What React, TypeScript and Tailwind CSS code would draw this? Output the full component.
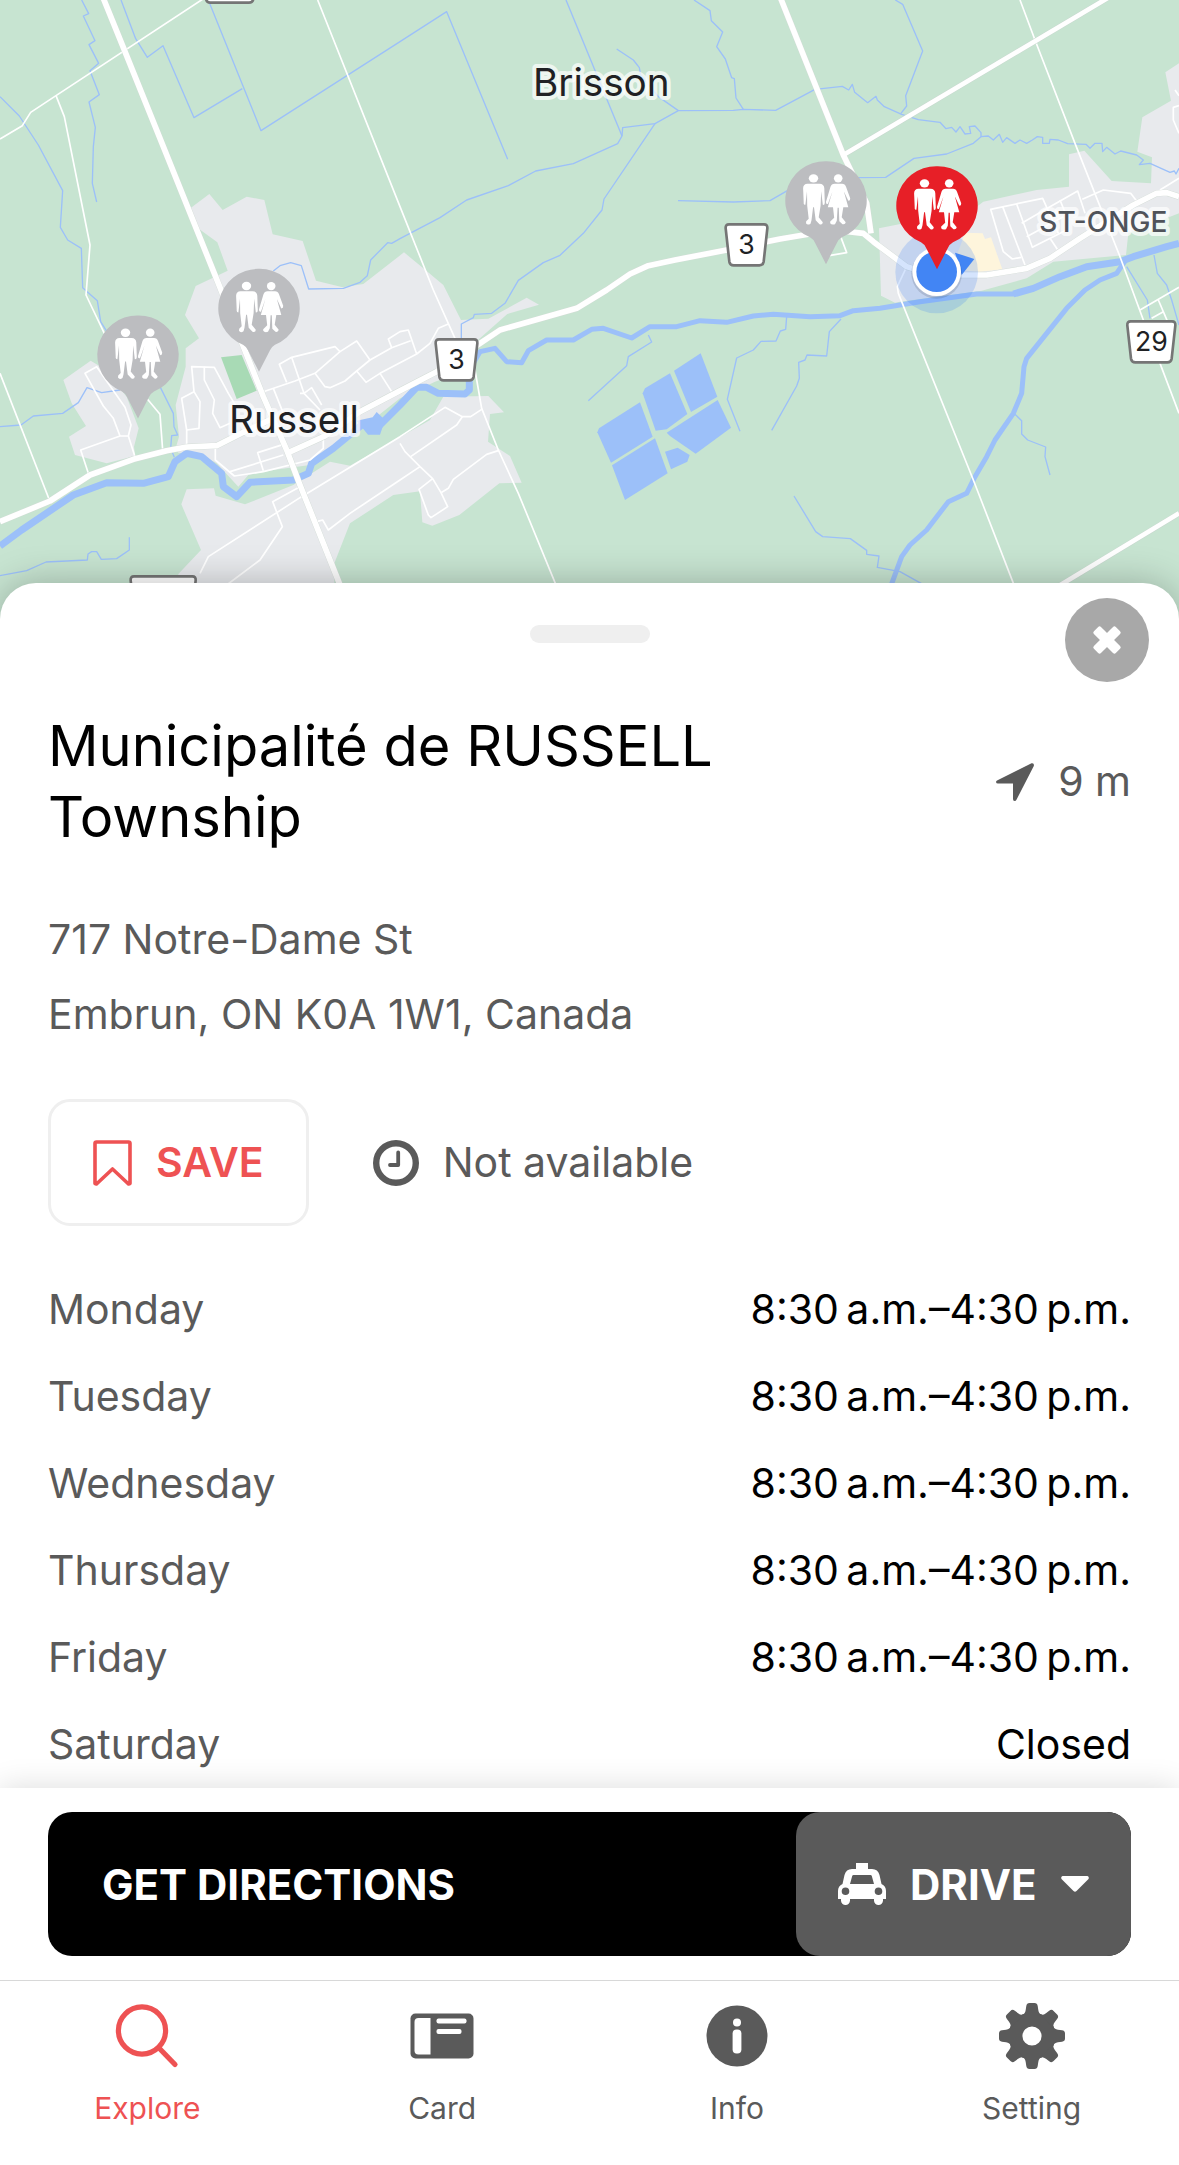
const hours = [
  { day: "Monday", time: "8:30\u2009a.m.–4:30\u2009p.m." },
  { day: "Tuesday", time: "8:30\u2009a.m.–4:30\u2009p.m." },
  { day: "Wednesday", time: "8:30\u2009a.m.–4:30\u2009p.m." },
  { day: "Thursday", time: "8:30\u2009a.m.–4:30\u2009p.m." },
  { day: "Friday", time: "8:30\u2009a.m.–4:30\u2009p.m." },
  { day: "Saturday", time: "Closed" },
];

const urbanAreas = [
  "567,628 628,582 668,630 740,590 793,600 818,703 908,723 948,842 1028,862 1090,852 1212,757 1270,805 1330,855 1383,960 1465,956 1550,910 1580,893 1617,914 1522,942 1434,1020 1390,1115 1305,1145 1200,1195 1080,1290 1000,1355 930,1395 820,1410 745,1425 715,1460 650,1390 600,1362 535,1358 527,1345 537,1310 527,1215 557,1100 557,1045 597,1015 555,945 587,858 683,812 652,727 590,682",
  "560,1468 642,1465 647,1487 735,1513 880,1455 990,1385 1050,1397 1290,1260 1330,1190 1465,1188 1512,1237 1470,1242 1464,1325 1530,1368 1565,1448 1498,1450 1378,1545 1297,1577 1267,1567 1260,1474 1180,1485 1050,1570 1003,1690 1003,1800 535,1800 535,1722 603,1650 544,1513",
  "190,1140 272,1082 310,1105 380,1190 416,1285 402,1340 405,1368 320,1390 225,1365 207,1310 258,1278 215,1210",
  "3207,463 3253,452 3335,543 3453,550 3456,472 3412,455 3427,352 3513,302 3496,217 3537,190 3537,640 3385,700 3378,765 3160,785 3080,835 2945,872 2700,905 2685,908 2643,887 2637,685 2720,668 2930,620 2950,605 3110,570 3207,560",
];

const ponds = [
  "1792,1297 1797,1285 1920,1207 1958,1310 1833,1388",
  "1965,1315 2003,1420 1875,1500 1836,1396",
  "1928,1180 1935,1165 2010,1120 2062,1242 2000,1288 1967,1292",
  "2022,1112 2102,1060 2152,1190 2073,1236",
  "2153,1200 2193,1283 2087,1361 2010,1308 2000,1298",
  "1995,1355 2033,1343 2069,1365 2062,1385 2013,1408",
  "1070,1262 1118,1252 1130,1236 1155,1260 1140,1304 1104,1304",
];

const streams = [
  "0,290 58,348 115,435 188,572 181,682 203,720 244,745 248,863 292,902 302,965 330,1010 480,1160 520,1240 522,1280 533,1305 515,1307 512,1345 523,1372",
  "245,0 266,41 250,48 285,122 267,134 296,190 270,212 298,284 267,306 286,382 280,440 277,550 290,606",
  "363,0 407,116 442,172 489,137 582,353 727,266",
  "627,5 783,392 1200,125 1340,35 1523,478",
  "820,813 840,797 872,788 904,797 926,867 1030,865 1080,847 1102,827 1112,780 1163,728 1175,730 1200,716 1320,653 1400,600 1525,557 1607,513 1720,491 1853,431 1866,408 1868,383 1965,371 2035,332 2200,331 2230,328 2327,331 2445,268 2527,259 2546,270 2557,253 2564,277 2603,308 2628,289 2632,300 2653,320 2705,343 2755,359 2820,367 2838,386 2855,382 2868,396 2880,380 2895,402 2912,400 2908,380 2925,378 2943,398 2943,410 2965,408 2980,420 2998,403 3008,427 3020,413 3045,430 3060,420 3080,430 3097,420 3112,410 3128,412 3128,430 3148,430 3150,418 3175,420 3203,431 3258,433 3270,445 3285,430 3306,430 3308,455 3320,442 3345,462 3362,453 3410,465 3430,480 3418,494 3450,490 3510,517 3523,513 3528,522 3537,505",
  "1698,0 1866,408",
  "1850,147 1900,180 1918,203 1922,225 1975,290 2035,332",
  "2082,0 2130,32 2134,62 2168,96 2150,140 2176,177 2195,233 2203,236 2208,294 2230,328",
  "2686,0 2708,13 2768,153 2717,287 2720,318 2703,340",
  "1965,371 1812,597 1806,630 1750,700 1680,766 1630,788 1555,841 1515,910 1475,940 1423,943 1420,953 1384,972 1384,1040",
  "2034,602 2200,606 2310,602 2400,550 2560,533 2657,532 2742,475 2840,462 2920,430 2943,410",
  "1945,1005 1955,1026 1885,1070 1880,1097 1765,1202",
  "2360,950 2357,988 2341,993 2328,1023 2283,1024 2260,1050 2210,1074 2182,1198 2220,1294",
  "2523,957 2488,995 2480,1068 2421,1065 2415,1080 2396,1087 2398,1135 2390,1158 2315,1291",
  "2382,1488 2447,1595 2468,1610 2551,1616 2600,1651 2600,1663 2637,1668 2632,1702 2700,1715 2790,1765",
  "3045,1243 3065,1262 3065,1302 3083,1320 3137,1341 3135,1370 3150,1425",
  "0,1280 63,1275 100,1248 188,1240 235,1208 261,1163 305,1178 360,1170",
  "0,1727 80,1712 138,1686 262,1680 264,1662 275,1655 290,1655 304,1678 350,1676 388,1650 388,1612",
  "3380,800 3442,900 3450,955",
  "3462,765 3472,820 3500,855 3515,900 3537,975",
];

const thinRoads = [
  "0,417 67,377 92,337 168,287 612,-5",
  "168,287 193,350 270,735 258,885 313,1000 440,1195 480,1243 488,1350",
  "0,1120 147,1497",
  "953,0 1200,620 1300,870 1365,1015 1425,1110 1445,1225 1495,1350 1555,1480 1670,1760",
  "3060,0 3105,120 3225,430 3360,770 3430,960 3480,1090 3537,1240",
  "2720,800 2692,860 2695,880 2920,1440 3044,1760",
  "2487,767 2540,758 2522,710",
  "3420,930 3537,862",
  "3475,900 3505,970",
  "3455,955 3490,935",
];

const streets = [
  "265,1420 242,1350 360,1308 385,1308 405,1370",
  "385,1308 393,1275 375,1222 290,1100 255,1120 310,1218 340,1255 360,1308",
  "560,1340 560,1290 545,1195 582,1175 575,1100 643,1102 685,1180 712,1225",
  "582,1175 600,1205 597,1285 560,1290",
  "613,1100 613,1140 643,1200 638,1240 660,1283 690,1270",
  "1020,1055 1005,1040 875,1072 838,1093 860,1147",
  "875,1072 912,1180 935,1163 965,1215",
  "820,1165 850,1240",
  "790,1175 885,1143 945,1120 1020,1055 1070,1023 1110,1080",
  "945,1120 975,1160 990,1163 1035,1143 1070,1113 1110,1080 1175,1043 1232,1022",
  "1070,1113 1098,1147 1140,1120 1250,1062",
  "1140,1120 1175,1175",
  "1175,1043 1165,1017 1200,995 1225,990 1250,1062 1290,1030 1315,985 1345,972",
  "900,1180 912,1180 960,1230",
  "646,1337 646,1380 703,1428 790,1415 930,1380 970,1345 970,1315",
  "690,1415 850,1365",
  "860,1330 773,1358 790,1412",
  "600,1720 625,1670 900,1493 1200,1310 1335,1222 1387,1250 1412,1250 1445,1228",
  "900,1460 818,1505 847,1580 780,1680 680,1755",
  "950,1565 968,1560 985,1590 1050,1540 1200,1440 1260,1400",
  "1200,1330 1215,1355 1260,1400 1298,1436 1323,1478 1343,1520 1293,1553 1285,1545 1257,1468 1298,1436",
  "1232,1370 1370,1275 1387,1250",
  "1323,1478 1345,1465 1360,1438 1460,1363 1495,1352",
  "3063,772 3037,777 3010,755 2972,628 3128,595 3175,700",
  "3008,620 3075,795",
  "3050,612 3097,742 3200,690",
  "3065,670 3150,620 3233,573 3255,640",
  "3247,598 3310,570 3392,580 3415,610",
  "3080,710 3190,650",
  "3150,715 3172,748",
  "3180,600 3200,650",
  "3525,270 3537,287",
  "3537,317 3520,322 3520,360 3537,400",
  "3480,570 3537,535",
];

const majorRoads = [
  "308,-10 375,155 490,440 655,850 790,1190 860,1350 900,1455 1022,1760",
  "0,1565 150,1503 270,1425 400,1378 500,1352 560,1341 650,1337 730,1297 830,1250",
  "860,1360 975,1308 1080,1235 1200,1172 1310,1115 1440,1030 1500,990 1730,925 1820,870 1890,822 1945,797 2025,780 2180,750 2340,717 2500,690 2590,700 2620,725 2720,800 2800,825 2960,825 3080,805 3150,775 3240,715 3400,615 3470,580 3500,578 3537,590",
  "2342,-5 2530,465 2600,610 2613,700",
];

const secondaryRoads = ["2530,465 3330,-10", "3160,1768 3537,1540"];

const riverWest =
  "0,1638 65,1590 220,1485 320,1448 430,1450 505,1430 525,1385 560,1360 605,1370 665,1420 670,1460 710,1490 750,1447 880,1440 925,1420 935,1390 1000,1345 1085,1275 1140,1275 1200,1215 1250,1162 1280,1162 1315,1180 1395,1182 1408,1170 1408,1100";

const riverMiddle =
  "1408,1110 1440,1055 1485,1045 1520,1085 1565,1088 1585,1052 1640,1020 1720,1020 1775,988 1810,985 1895,1014 1950,980 2030,980 2100,962 2180,967 2260,948 2320,943 2430,950 2520,947 2560,932 2640,925 2760,905 2870,890 2930,882 3040,882 3100,865";

const riverEast = "3040,882 3100,865 3180,830 3260,800 3360,785 3400,770 3500,740 3537,730";

const riverBranch =
  "3377,780 3350,820 3300,840 3255,870 3200,925 3080,1075 3072,1100 3065,1180 3040,1240 2985,1320 2960,1370 2925,1430 2900,1480 2845,1505 2780,1590 2730,1635 2705,1670 2670,1765";

function Lines({ items, color, width }: { items: string[]; color: string; width: number }) {
  return (
    <g fill="none" stroke={color} strokeWidth={width} strokeLinejoin="round">
      {items.map((points) => (
        <polyline key={points} points={points} />
      ))}
    </g>
  );
}

function RestroomPin({ x, y, color }: { x: number; y: number; color: string }) {
  return (
    <g transform={`translate(${x} ${y}) scale(3)`}>
      <path
        fill={color}
        d="M0 -39.500A40 39.500 0 0 1 16 36.500Q12.500 38.500 11 42L0 63.500L-11 42Q-12.500 38.500 -16 36.500A40 39.500 0 0 1 0 -39.500Z"
      />
      <g fill="#fff">
        <ellipse cx="-12.500" cy="-22.300" rx="4.700" ry="4.200" />
        <path d="M-18.500 -17H-6.500Q-2 -17 -1.700 -12.500L-1.200 2Q-1.300 4.500 -3.200 4.200L-4.800 -9.500L-5.400 5L-7.300 16.500L-3.200 21.500Q-3.500 24.500 -6.500 23.500L-10.300 19.500L-12 6.500H-12.900L-14.500 19.500L-15.500 23Q-18.500 25 -20 22.500L-19.800 20.500L-17.300 18L-18.800 5L-19 -9.500L-20.600 4.200Q-22.600 4.200 -22.300 1.500L-22.900 -12.500Q-22.700 -17 -18.500 -17Z" />
        <ellipse cx="12.200" cy="-22.300" rx="4.300" ry="4.100" />
        <path d="M8.500 -17H16Q19 -17 20 -14L24.200 -2.500Q24.500 0 22.300 0.200L17.800 -9.500L22.300 6.700H17.300L15.700 16.500L19.700 21.500Q19.300 24.200 16.500 23.500L13.300 20.500L12.800 7H11.600L10.800 20L9 23.500Q5.500 24.500 4.200 22.500V20.800L8.200 17L7 6.700H1.800L6.500 -9.500L2 3.200Q-0.300 4 0 1L4.500 -14Q5.500 -17 8.500 -17Z" />
      </g>
    </g>
  );
}

function Shield({ x, y, width, label }: { x: number; y: number; width: number; label?: string }) {
  return (
    <g transform={`translate(${x} ${y})`}>
      <path
        d={`M14 4H${width - 14}Q${width - 3} 4 ${width - 4} 16L${width - 15} 116Q${width - 17} 127 ${width - 28} 127H28Q17 127 15 116L4 16Q3 4 14 4Z`}
        fill="#fff"
        stroke="#757575"
        strokeWidth="8"
      />
      {label && (
        <text x={width / 2} y="94" textAnchor="middle" fontSize="80" fill="#202124">
          {label}
        </text>
      )}
    </g>
  );
}

function AreaMap() {
  return (
    <svg
      viewBox="0 0 3537 1920"
      role="img"
      aria-label="Map"
      className="block w-full bg-[#c7e4d1] font-['Inter',sans-serif]"
    >
      {urbanAreas.map((points) => (
        <polygon key={points} points={points} fill="#e8eaed" />
      ))}
      <polygon points="663,1072 725,1065 770,1172 710,1197" fill="#a8dab5" />
      <polygon points="2860,790 2880,740 2895,698 2948,700 2955,717 2973,712 3007,808 2940,815 2870,810" fill="#fef5dc" />

      <Lines items={streams} color="#9cc0f9" width={4} />
      <Lines items={[riverWest, riverEast]} color="#9cc0f9" width={21} />
      <Lines items={[riverMiddle, riverBranch]} color="#9cc0f9" width={15} />
      {ponds.map((points) => (
        <polygon key={points} points={points} fill="#9cc0f9" />
      ))}

      <Lines items={streets} color="#fff" width={5} />
      <Lines items={thinRoads} color="#fff" width={5} />
      <Lines items={majorRoads} color="#d3dcd6" width={19} />
      <Lines items={secondaryRoads} color="#c8d8cf" width={17} />
      <Lines items={secondaryRoads} color="#fff" width={14} />
      <Lines items={majorRoads} color="#fff" width={17} />

      <Shield x={603} y={-119} width={172} />
      <Shield x={388} y={1725} width={203} />
      <Shield x={1303} y={1014} width={133} label="3" />
      <Shield x={2173} y={669} width={133} label="3" />
      <Shield x={3378} y={960} width={152} label="29" />

      <g textAnchor="middle" stroke="#fff" strokeOpacity="0.7" strokeWidth="24" strokeLinejoin="round" paintOrder="stroke">
        <text x="1804" y="288" fontSize="116" fill="#202124">
          Brisson
        </text>
        <text x="882" y="1300" fontSize="116" fill="#202124">
          Russell
        </text>
        <text x="3310" y="697" fontSize="84" fontWeight="500" fill="#50535a">
          ST-ONGE
        </text>
      </g>

      <RestroomPin x={414} y={1065} color="#bcbdc0" />
      <RestroomPin x={777} y={925} color="#bcbdc0" />
      <RestroomPin x={2478} y={602} color="#bcbdc0" />

      {/* current position */}
      <circle cx="2810" cy="816" r="124" fill="#4285f4" fillOpacity="0.22" />
      <path d="M2865 758L2923 777L2885 825Z" fill="#4285f4" />
      <circle cx="2810" cy="820" r="76" fill="#1f2937" fillOpacity="0.15" />
      <circle cx="2810" cy="815" r="73" fill="#fff" />
      <circle cx="2810" cy="815" r="61" fill="#4285f4" />
      <RestroomPin x={2811} y={617} color="#e71f27" />
    </svg>
  );
}

function LocationArrowIcon() {
  return (
    <svg viewBox="0 0 38 38" className="size-[38px]" fill="currentColor" aria-hidden="true">
      <path d="M35.500 0.300Q38.500 -0.300 37.800 3L20.600 36.500Q20 38 18.500 38Q17 37.800 17 36V20.600H2Q0.200 20.500 0 19Q0 17.800 1.500 17.200Z" />
    </svg>
  );
}

function BookmarkIcon() {
  return (
    <svg viewBox="0 0 39 46" className="h-[46px] w-[39px]" fill="none" aria-hidden="true">
      <path d="M2 3.500Q2 2 3.500 2H35.500Q37 2 37 3.500V43.500L35.500 44L19.500 29L3.500 44L2 43.500Z" stroke="currentColor" strokeWidth="3.600" strokeLinejoin="round" />
    </svg>
  );
}

function ClockIcon() {
  return (
    <svg viewBox="0 0 46 46" className="size-[46px]" fill="none" stroke="currentColor" aria-hidden="true">
      <circle cx="23" cy="23" r="19.800" strokeWidth="6.400" />
      <path d="M25.200 12.500V25H17" strokeWidth="3.800" strokeLinecap="round" strokeLinejoin="round" />
    </svg>
  );
}

function TaxiIcon() {
  return (
    <svg viewBox="0 0 48 42" className="h-[42px] w-12" fill="currentColor" aria-hidden="true">
      <path
        fillRule="evenodd"
        d="M18 0H30V6H34Q40 6 41.500 12L43.500 21Q48 23 48 28V36H45V37.500A4.500 4.500 0 0 1 36 37.500V36H12V37.500A4.500 4.500 0 0 1 3 37.500V36H0V28Q0 23 4.500 21L6.500 12Q8 6 14 6H18ZM15.500 12Q14.500 12 14.200 13L12 21H36L33.800 13Q33.500 12 32.500 12ZM7.500 24.500A3.800 3.800 0 1 0 7.500 32.100A3.800 3.800 0 1 0 7.500 24.500ZM40.500 24.500A3.800 3.800 0 1 0 40.500 32.100A3.800 3.800 0 1 0 40.500 24.500Z"
      />
    </svg>
  );
}

function SearchIcon() {
  return (
    <svg viewBox="0 0 66 66" className="size-[66px]" fill="none" stroke="currentColor" aria-hidden="true">
      <circle cx="28" cy="27.500" r="23.600" strokeWidth="5.200" />
      <path d="M45 45L61 61.500" strokeWidth="5.200" strokeLinecap="round" />
    </svg>
  );
}

function CardIcon() {
  return (
    <svg viewBox="0 0 66 66" className="size-[66px]" aria-hidden="true">
      <rect x="1.500" y="10.500" width="63" height="45" rx="5" fill="currentColor" />
      <path d="M21.500 15V51.500H9.500Q5.500 51.500 5.500 47.500V19Q5.500 15 9.500 15Z" fill="#fff" />
      <rect x="27.500" y="15.500" width="30" height="5" rx="2" fill="#fff" />
      <rect x="27.500" y="26" width="25" height="5" rx="2" fill="#fff" />
    </svg>
  );
}

function InfoIcon() {
  return (
    <svg viewBox="0 0 66 66" className="size-[66px]" aria-hidden="true">
      <circle cx="33" cy="33" r="30.500" fill="currentColor" />
      <circle cx="33" cy="19.500" r="4" fill="#fff" />
      <rect x="28.600" y="26.500" width="8.800" height="24" rx="4" fill="#fff" />
    </svg>
  );
}

function GearIcon() {
  return (
    <svg viewBox="-33 -33 66 66" className="size-[66px]" fill="currentColor" aria-hidden="true">
      <path fillRule="evenodd" d="M0 -23.500A23.500 23.500 0 1 1 0 23.500A23.500 23.500 0 1 1 0 -23.500ZM0 -9.600A9.600 9.600 0 1 0 0 9.600A9.600 9.600 0 1 0 0 -9.600Z" />
      {[0, 45, 90, 135, 180, 225, 270, 315].map((angle) => (
        <path key={angle} transform={`rotate(${angle})`} d="M-10 -21Q-6.800 -22 -6.300 -26L-5.700 -30Q-5.300 -33 -2.500 -33H2.500Q5.300 -33 5.700 -30L6.300 -26Q6.800 -22 10 -21Z" />
      ))}
    </svg>
  );
}

const tabs = [
  { name: "Explore", icon: <SearchIcon />, active: true },
  { name: "Card", icon: <CardIcon />, active: false },
  { name: "Info", icon: <InfoIcon />, active: false },
  { name: "Setting", icon: <GearIcon />, active: false },
];

export default function App() {
  return (
    <div className="flex min-h-screen flex-col bg-white font-['Inter',sans-serif] text-[41px] text-[#5a5a5a]">
      <AreaMap />

      {/* Place details sheet */}
      <main className="relative -mt-[57px] flex-1 rounded-t-[36px] bg-white px-12 pt-[42px] shadow-[0_0_36px_rgba(0,0,0,0.25)]">
        <div className="mx-auto h-[18px] w-[120px] rounded-full bg-[#efefef]"></div>
        <button
          type="button"
          aria-label="Close"
          className="absolute top-[15px] right-[30px] flex size-[84px] items-center justify-center rounded-full bg-[#a8a8a8] text-white"
        >
          <svg viewBox="-16 -16 32 32" className="size-8" fill="currentColor" aria-hidden="true">
            <rect x="-15.500" y="-5" width="31" height="10" rx="2" transform="rotate(45)" />
            <rect x="-15.500" y="-5" width="31" height="10" rx="2" transform="rotate(-45)" />
          </svg>
        </button>

        <div className="mt-[68px] flex items-center justify-between">
          <h1 className="w-3/4 text-[56px] leading-[71px] text-black">Municipalité de RUSSELL Township</h1>
          <p className="flex items-center gap-6">
            <LocationArrowIcon />
            <span>9 m</span>
          </p>
        </div>

        <address className="mt-[49px] leading-[75px] not-italic">
          717 Notre-Dame St
          <br />
          Embrun, ON K0A 1W1, Canada
        </address>

        <div className="mt-[47px] flex items-center gap-16">
          <button
            type="button"
            className="flex h-[127px] items-center gap-6 rounded-[22px] border-3 border-[#efefef] px-[42px] font-semibold text-[#ee5253]"
          >
            <BookmarkIcon />
            SAVE
          </button>
          <p className="flex items-center gap-6">
            <ClockIcon />
            Not available
          </p>
        </div>

        <table className="mt-10 w-full">
          <tbody>
            {hours.map((row) => (
              <tr key={row.day} className="h-[87px]">
                <th scope="row" className="p-0 text-left font-normal">{row.day}</th>
                <td className="p-0 text-right text-black">{row.time}</td>
              </tr>
            ))}
          </tbody>
        </table>
      </main>

      {/* Directions bar */}
      <footer className="sticky bottom-0 bg-white shadow-[0_0_30px_rgba(0,0,0,0.14)]">
        <div className="px-12 py-6">
          <div className="flex h-36 rounded-[24px] bg-black text-[42px] font-bold text-white">
            <button type="button" className="flex-1 px-[54px] text-left">
              GET DIRECTIONS
            </button>
            <label className="flex items-center gap-6 rounded-[24px] bg-[#5a5a5a] px-[42px]">
              <TaxiIcon />
              <select aria-label="Travel mode" className="appearance-none bg-transparent font-bold">
                <option>DRIVE</option>
              </select>
              <svg viewBox="0 0 28 16" className="h-4 w-7" fill="currentColor" aria-hidden="true">
                <path d="M1.500 0H26.500Q28.500 1 27.500 3L15.500 15Q14 16.500 12.500 15L0.500 3Q-0.500 1 1.500 0Z" />
              </svg>
            </label>
          </div>
        </div>

        <nav className="grid grid-cols-4 border-t border-[#d8d8d8] pt-[22px] pb-[39px]">
          {tabs.map((tab) => (
            <a
              key={tab.name}
              href={`#${tab.name.toLowerCase()}`}
              className={`flex flex-col items-center gap-[21px] text-[30px] leading-9 ${
                tab.active ? "text-[#ee5253]" : "text-[#5a5a5a]"
              }`}
            >
              {tab.icon}
              {tab.name}
            </a>
          ))}
        </nav>
      </footer>
    </div>
  );
}
